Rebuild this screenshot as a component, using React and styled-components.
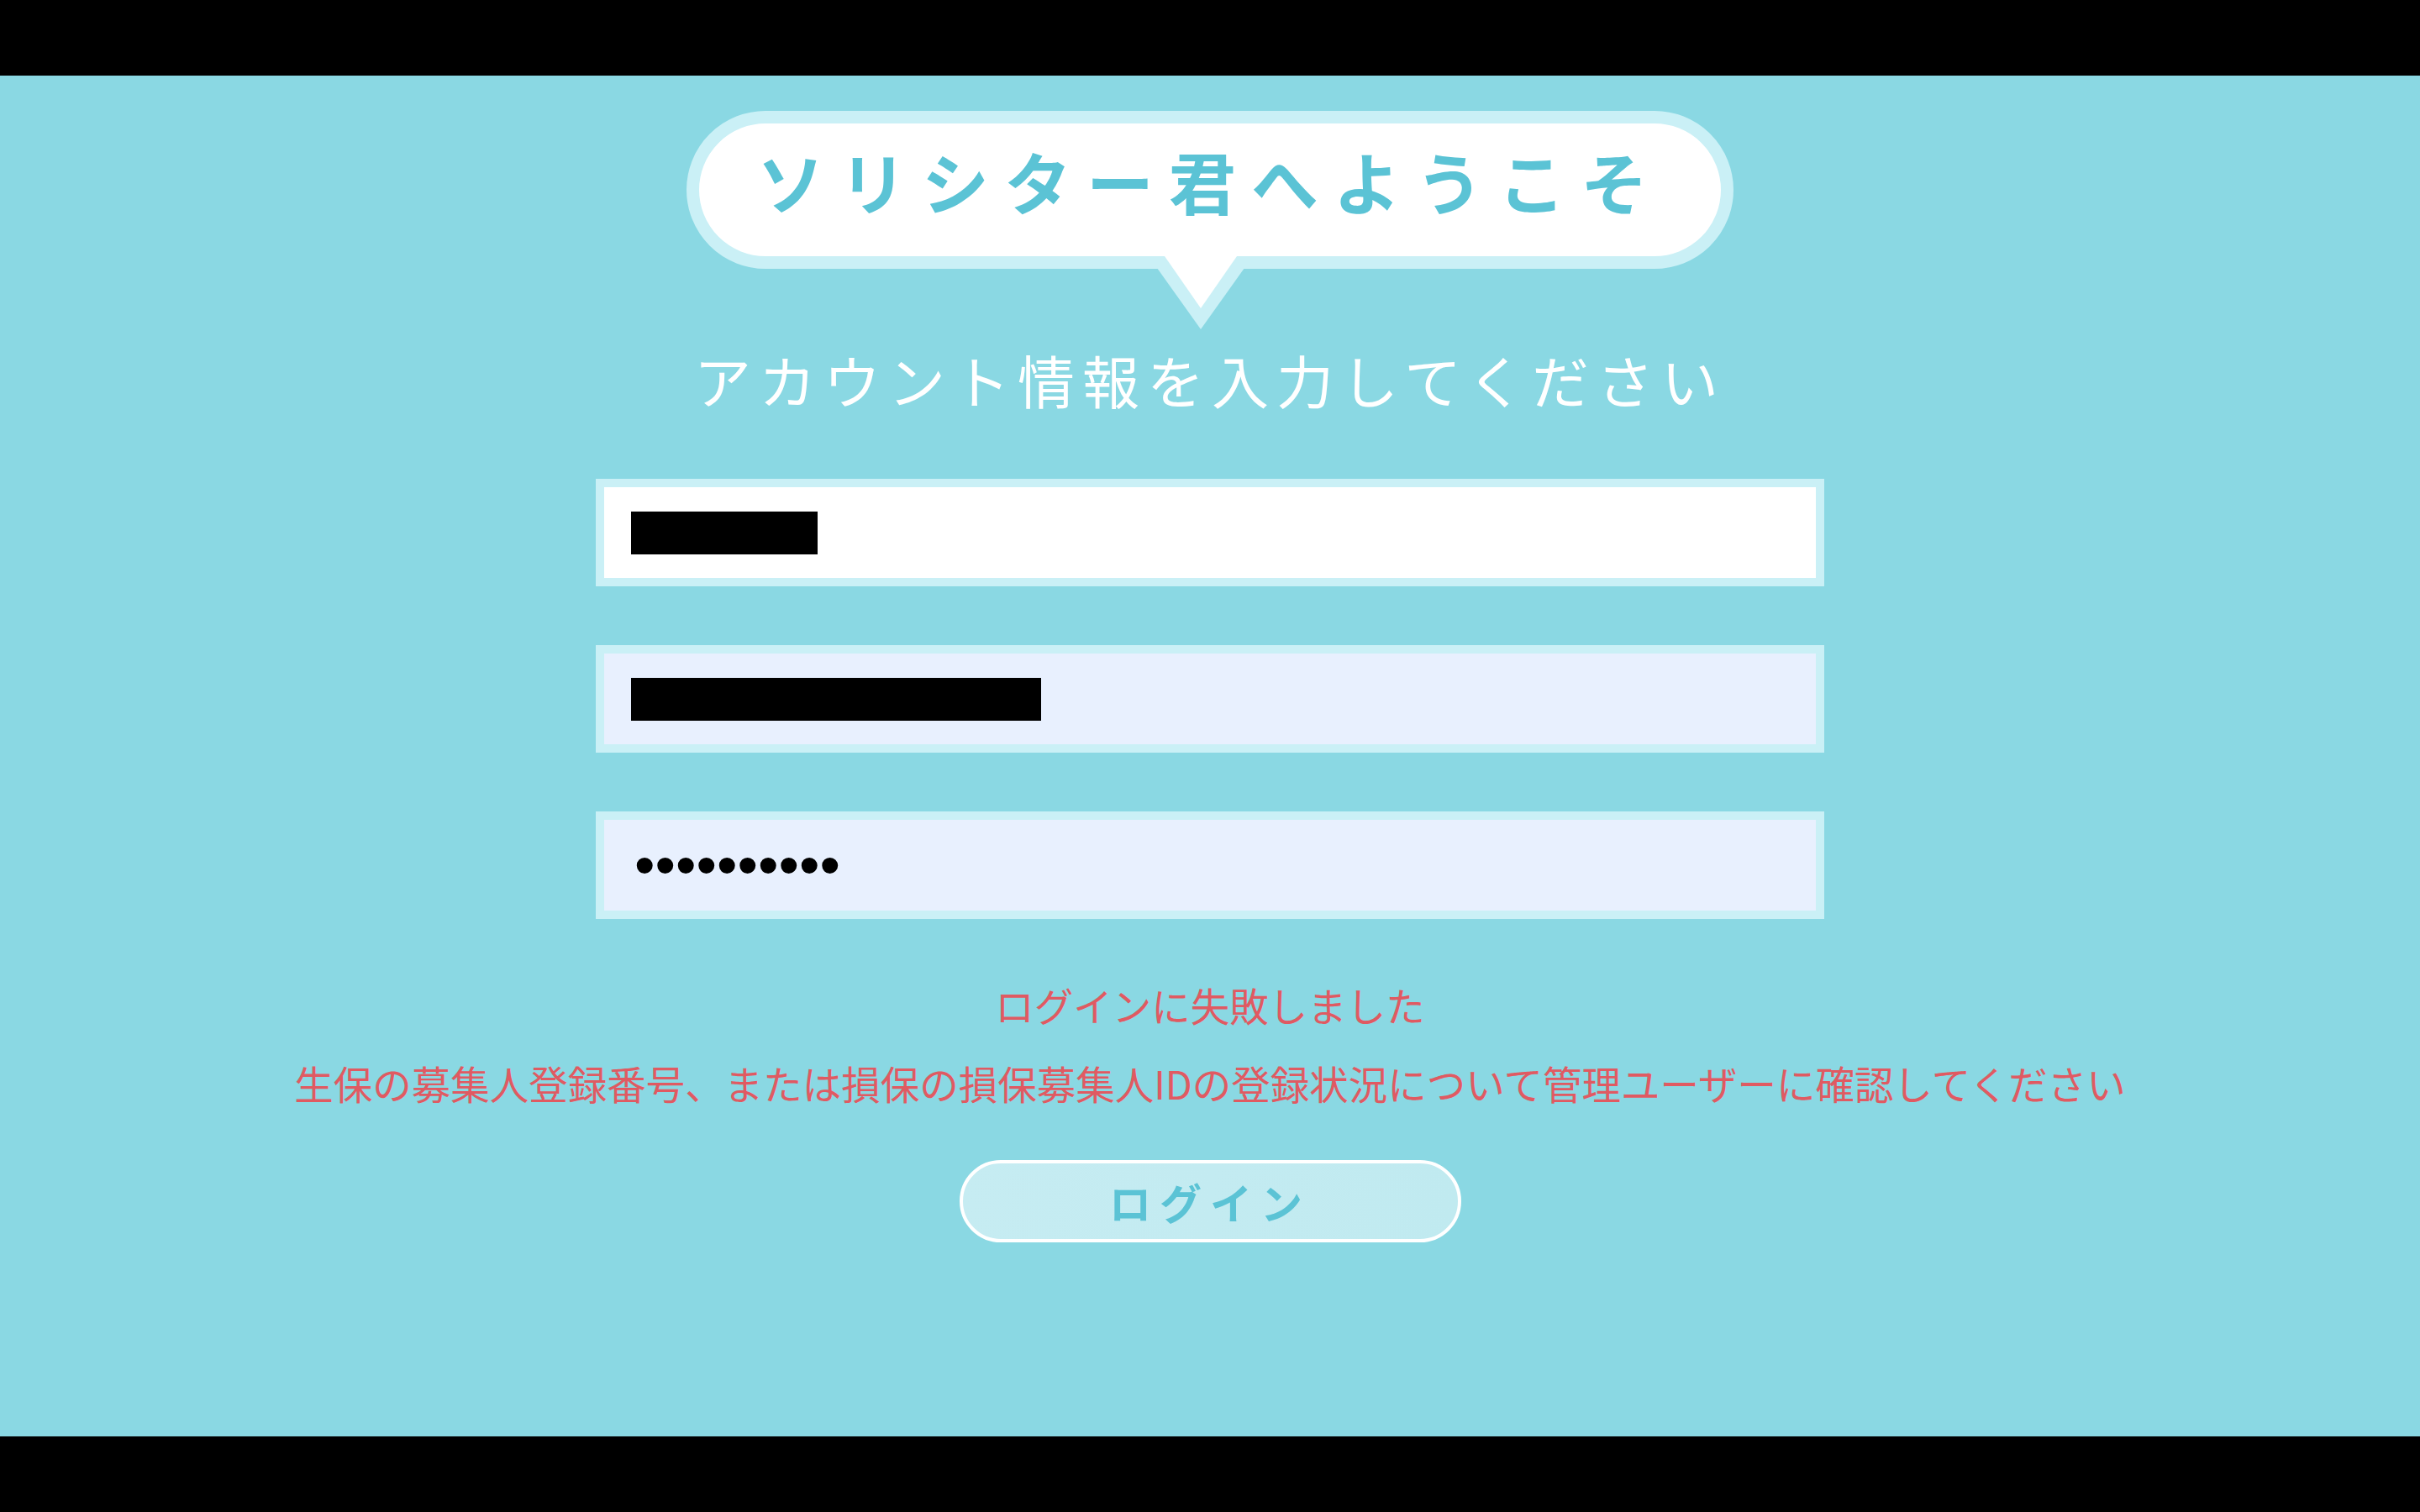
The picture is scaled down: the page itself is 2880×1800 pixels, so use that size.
import React from "react";
import styled, { createGlobalStyle } from "styled-components";

const GlobalStyle = createGlobalStyle`
  html, body {
    margin: 0;
    padding: 0;
    background: #000;
  }
  body {
    font-family: "Noto Sans CJK JP", "Noto Sans", sans-serif;
  }
`;

const Screen = styled.div`
  display: flex;
  flex-direction: column;
  height: 100vh;
  background: #000;
`;

const Letterbox = styled.div`
  height: 90px;
  flex: none;
  background: #000;
`;

const Main = styled.main`
  flex: 1;
  display: flex;
  flex-direction: column;
  align-items: center;
  padding-top: 42px;
  background: #8ad8e3;
`;

const Bubble = styled.div`
  position: relative;
  box-sizing: border-box;
  width: 1246px;
  height: 188px;
  border: 15px solid #caf0f6;
  border-radius: 94px;
  background: #fff;
  display: flex;
  align-items: center;
  justify-content: center;

  /* tail of the speech bubble */
  &::before,
  &::after {
    content: "";
    position: absolute;
    top: 100%;
    left: calc(50% - 11px);
    transform: translateX(-50%);
    width: 0;
    height: 0;
  }
  &::before {
    border-left: 62px solid transparent;
    border-right: 62px solid transparent;
    border-top: 87px solid #caf0f6;
  }
  &::after {
    border-left: 43px solid transparent;
    border-right: 43px solid transparent;
    border-top: 62px solid #fff;
  }
`;

const Title = styled.h1`
  margin: 0 0 24px;
  font-size: 80px;
  font-weight: 700;
  line-height: 1;
  letter-spacing: 18px;
  color: #5bc3d5;
`;

const Lead = styled.p`
  margin: 94px 0 0;
  font-size: 68px;
  line-height: 76px;
  letter-spacing: 9px;
  color: #fff;
`;

const Form = styled.div`
  display: flex;
  flex-direction: column;
  gap: 70px;
  margin-top: 80px;
`;

const Field = styled.div`
  box-sizing: border-box;
  width: 1462px;
  height: 128px;
  border: 10px solid #caf0f6;
  background: ${(p) => (p.$autofill ? "#e8f0fe" : "#fff")};
  display: flex;
  align-items: center;
  padding: 0 32px;
`;

const Redacted = styled.span`
  display: block;
  height: 51px;
  width: ${(p) => p.$w}px;
  background: #000;
`;

const Dots = styled.span`
  font-family: "Liberation Sans", Arial, sans-serif;
  font-size: 70px;
  line-height: 1;
  color: #000;
  padding-left: 4px;
`;

const Errors = styled.div`
  margin-top: 55px;
  text-align: center;
  font-size: 46.5px;
  line-height: 93px;
  color: #e05a62;
`;

const LoginButton = styled.button`
  box-sizing: border-box;
  margin-top: 46px;
  width: 597px;
  height: 98px;
  border: 4px solid #fff;
  border-radius: 49px;
  background: linear-gradient(90deg, #c6ecf2, #c0eaf0);
  font-family: "Noto Sans CJK JP", sans-serif;
  font-size: 50px;
  font-weight: 700;
  letter-spacing: 10px;
  color: #5bc3d5;
  cursor: pointer;
`;

export default function App() {
  return (
    <>
      <GlobalStyle />
      <Screen>
        <Letterbox />
        <Main>
          <Bubble>
            <Title>ソリシター君へようこそ</Title>
          </Bubble>
          <Lead>アカウント情報を入力してください</Lead>
          <Form>
            <Field>
              <Redacted $w={222} />
            </Field>
            <Field $autofill>
              <Redacted $w={488} />
            </Field>
            <Field $autofill>
              <Dots>••••••••••</Dots>
            </Field>
          </Form>
          <Errors>
            <div>ログインに失敗しました</div>
            <div>
              生保の募集人登録番号、または損保の損保募集人IDの登録状況について管理ユーザーに確認してください
            </div>
          </Errors>
          <LoginButton>ログイン</LoginButton>
        </Main>
        <Letterbox />
      </Screen>
    </>
  );
}
